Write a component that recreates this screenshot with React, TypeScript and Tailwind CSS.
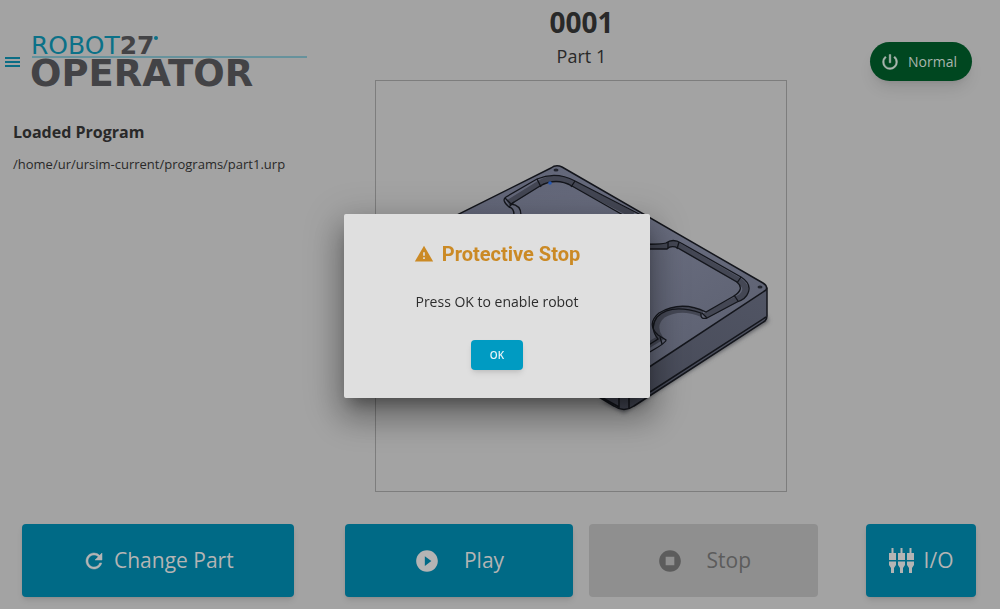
import { MdPlayCircleFilled, MdPowerSettingsNew, MdRefresh, MdStopCircle, MdWarning } from "react-icons/md";

const actionButton = "flex h-[73px] items-center justify-center rounded text-[21px] shadow-md";
const primary = "bg-[#006a86] text-[#b4b4b4]";
const boldIcon = "stroke-current stroke-[0.5px] [&>path:first-child]:stroke-none";

function MenuIcon() {
  return (
    <svg className="h-4 w-4" viewBox="0 0 16 16" stroke="#0b6d85" strokeWidth="2" aria-hidden="true">
      <path d="M0 4h15M0 8h15M0 12h15" />
    </svg>
  );
}

function Logo() {
  return (
    <svg className="h-[56px] w-[277px] shrink-0 overflow-visible" viewBox="0 0 277 56" role="img" aria-label="Robot27 Operator">
      <g fontFamily="DejaVu Sans, sans-serif">
        <text x="-1" y="20" fontSize="25" fill="#0b7188">
          ROBOT
          <tspan fill="#434346" fontWeight="bold">27</tspan>
        </text>
        <text x="-2" y="52" fontSize="37" fontWeight="bold" fill="#434346">OPERATOR</text>
      </g>
      <path d="M0 23h275" stroke="#2b8195" />
      <circle cx="124" cy="4" r="2" fill="#0b7188" />
    </svg>
  );
}

function ConnectorsIcon() {
  return (
    <svg className="h-[25px] w-[25px]" viewBox="0 0 25 25" fill="currentColor" aria-hidden="true">
      {[0, 9, 18].map((x) => (
        <path
          key={x}
          transform={`translate(${x} 0)`}
          d="M2.500 0h2v5H7v7H0V5h2.500zM0 13.500h7V17L5 20v5H2v-5L0 17z"
        />
      ))}
    </svg>
  );
}

function PartDrawing() {
  return (
    <svg className="block w-full" viewBox="377 80 410 410" role="img" aria-label="Part 1">
      <defs>
        <linearGradient id="face" x1="0" y1="0" x2="1" y2="1">
          <stop offset="0" stopColor="#5f6375" />
          <stop offset="0.500" stopColor="#696d7f" />
          <stop offset="1" stopColor="#595d6d" />
        </linearGradient>
        <linearGradient id="side" x1="0" y1="1" x2="1" y2="0">
          <stop offset="0" stopColor="#3f424e" />
          <stop offset="1" stopColor="#545868" />
        </linearGradient>
        <filter id="soft">
          <feGaussianBlur stdDeviation="2" />
        </filter>
      </defs>
      <path d="M602 400L625 412L770 320L766 314L625 398z" fill="#55565c" filter="url(#soft)" />
      <g stroke="#14161c" strokeWidth="1.500" strokeLinejoin="round">
        <path d="M400 243V277L615 405Q625 412 635 405L766 320Q768 318 768 315V287L625 370z" fill="url(#side)" />
        <path d="M552 167Q557 163 563 166L764 282Q769 285 767 289L632 378Q625 382 618 378L400 243z" fill="url(#face)" />
        <path d="M620 380V407M630 380V407M602 396L620 406M767 316L651 391" fill="none" />
      </g>
      <path
        d="M509 202L541 182Q557 173 573 182L634 214M640 245H667Q674 240 680 245L739 279Q752 287 742 296L706 315M703 313Q681 304 664 314Q652 324 661 337L640 350"
        fill="none"
        stroke="#444754"
        strokeWidth="6"
      />
      <g fill="none" stroke="#14161c" strokeWidth="1.300">
        <path d="M515 214Q515 207 510 206Q502 199 507 196L538 178Q557 170 576 180L642 214" />
        <path d="M522 214Q522 204 512 203L541 185Q557 176 573 185L624 214" />
        <path d="M538 178L542 186M576 180L572 186M510 206L515 201M506 197L513 204" />
        <path d="M640 243Q660 244 667 242Q674 237 682 242L742 276Q753 283 749 292Q747 298 738 301L708 317Q701 319 702 312Q672 302 658 316Q650 327 659 338L640 350" />
        <path d="M640 248H668Q672 244 679 247L738 281Q746 288 735 295L707 311Q682 299 660 312Q647 323 659 334L667 339Q668 342 640 357" />
        <path d="M669 241V247M680 241L678 248M742 276L738 282M735 294L739 300M703 312L708 317M661 336L663 343" />
      </g>
      <ellipse cx="557" cy="169" rx="2.500" ry="1.500" fill="#22252e" />
      <ellipse cx="761" cy="286" rx="2.500" ry="1.500" fill="#22252e" />
      <circle cx="551" cy="182" r="1.800" fill="#2557b4" />
    </svg>
  );
}

function ProtectiveStopDialog() {
  return (
    <div className="fixed inset-0 flex items-center justify-center pt-[3px] pr-[6px]">
      <div
        role="dialog"
        aria-labelledby="dialog-title"
        className="flex w-[306px] flex-col items-center rounded-xs bg-[#dfdfdf] pt-6 pb-7 shadow-[0_11px_15px_-7px_rgba(0,0,0,0.35),0_18px_32px_3px_rgba(0,0,0,0.25),0_9px_36px_8px_rgba(0,0,0,0.15)]"
      >
        <h2 id="dialog-title" className="flex items-center gap-2 font-[Roboto] text-[20px] leading-8 font-bold text-[#cb8a25]">
          <MdWarning className="h-5 w-5" aria-hidden="true" />
          Protective Stop
        </h2>
        <p className="mt-5 text-[14px] leading-6 text-[#2d2d2d]">Press OK to enable robot</p>
        <button type="button" className="mt-[26px] h-[30px] w-[52px] rounded-sm bg-[#009bc2] text-[10px] font-semibold text-[#e8f4f7] shadow-md">
          OK
        </button>
      </div>
    </div>
  );
}

export default function App() {
  return (
    <div className="min-h-screen bg-[#a3a3a3] font-['Open_Sans',sans-serif] text-[#292929]">
      <main className="grid grid-cols-[minmax(0,272fr)_minmax(0,477fr)_minmax(0,110fr)] gap-x-12 pr-6 pb-3 pl-[22px]">
        <section className="-ml-[17px] pt-[34px]">
          <header className="flex items-center gap-[11px]">
            <button type="button" aria-label="Menu" className="shrink-0">
              <MenuIcon />
            </button>
            <Logo />
          </header>
          <div className="pt-[30px] pl-2">
            <h2 className="text-[16px] leading-6 font-bold">Loaded Program</h2>
            <p className="mt-2 text-[13px] leading-6 whitespace-nowrap">/home/ur/ursim-current/programs/part1.urp</p>
          </div>
        </section>

        <section className="flex flex-col items-center pt-1 pl-[3px]">
          <h1 className="text-[28px] leading-9 font-bold">0001</h1>
          <p className="text-[18px] leading-8">Part 1</p>
          <div className="mt-2 w-full max-w-[412px] border border-[#7d7d7d]">
            <PartDrawing />
          </div>
        </section>

        <section className="flex items-start justify-end pt-[42px] pr-1">
          <button type="button" className="flex h-[39px] shrink-0 items-center gap-2 rounded-full bg-[#004720] pr-[15px] pl-[10px] text-[14px] text-[#a9b5ae] shadow-lg">
            <MdPowerSettingsNew className={`h-5 w-5 ${boldIcon}`} aria-hidden="true" />
            Normal
          </button>
        </section>

        <div className="mt-8">
          <button type="button" className={`${actionButton} ${primary} w-full gap-2`}>
            <MdRefresh className={`h-6 w-6 ${boldIcon}`} aria-hidden="true" />
            Change Part
          </button>
        </div>
        <div className="mt-8 grid grid-cols-2 gap-4 pl-[3px]">
          <button type="button" className={`${actionButton} ${primary} gap-6`}>
            <MdPlayCircleFilled className="h-[26px] w-[26px]" aria-hidden="true" />
            Play
          </button>
          <button type="button" disabled className="flex h-[73px] items-center justify-center gap-6 rounded bg-[#8f8f8f] text-[21px] text-[#5c5c5c]">
            <MdStopCircle className="h-[26px] w-[26px]" aria-hidden="true" />
            Stop
          </button>
        </div>
        <div className="mt-8">
          <button type="button" className={`${actionButton} ${primary} w-full gap-[10px]`}>
            <ConnectorsIcon />
            I/O
          </button>
        </div>
      </main>

      <ProtectiveStopDialog />
    </div>
  );
}
